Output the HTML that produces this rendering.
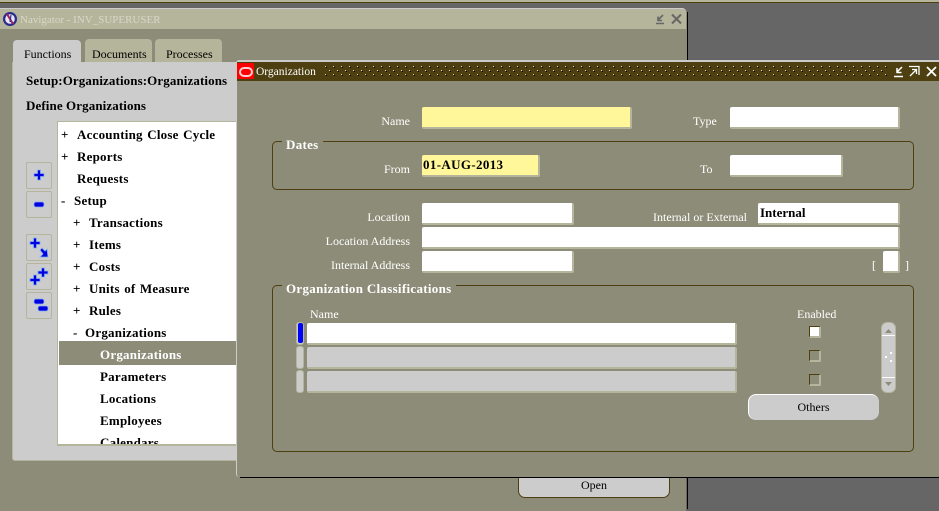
<!DOCTYPE html>
<html><head><meta charset="utf-8"><style>
html,body{margin:0;padding:0}
body{width:939px;height:511px;overflow:hidden;position:relative;background:#666;font-family:"Liberation Serif",serif;font-size:12px;-webkit-font-smoothing:none;font-smooth:never}
div{position:absolute;box-sizing:border-box}
.t{white-space:nowrap;line-height:16px;height:16px}
.w{color:#fff}
.r{text-align:right}
.b{font-weight:bold;font-size:13px;letter-spacing:.1px}
.tr{color:#000;font-weight:bold;font-size:13px;left:0;letter-spacing:.22px;word-spacing:1px}
.f{background:#fff;border-right:2px solid #b5b59c;border-bottom:2px solid #b5b59c;border-radius:2px}
.y{background:#fff799}
.g{background:#ccc}
.btn{background:#ccc;border:1px solid #b5b59c;border-radius:2px;width:26px;height:27px;left:26px}
.grp{border:1px solid #4d3f10;border-radius:5px}
.leg{background:#8c8c78;color:#fff;font-weight:bold;font-size:13px;padding:0 4px;line-height:16px;white-space:nowrap;letter-spacing:.3px}
.ind{left:296px;width:8px;height:23px;background:#ccc;border:1px solid #b5b59c;border-radius:3px}
.cb{width:12px;height:12px;border-top:1px solid #4d3f10;border-left:1px solid #4d3f10;border-right:2px solid #b5b59c;border-bottom:2px solid #b5b59c}
svg{position:absolute;overflow:visible}
</style></head><body>
<div style="left:0;top:0;width:939px;height:2px;background:#b5b59c"></div>
<div style="left:0;top:2px;width:939px;height:1px;background:#4d3f10"></div>

<!-- Navigator window -->
<div style="left:0;top:8px;width:687px;height:503px;background:#8c8c78;border-radius:0 5px 0 0"></div>
<div style="left:687px;top:12px;width:1px;height:497px;background:#000"></div>
<div style="left:0;top:8px;width:686px;height:21px;background:#b5b59c;border-top:1px solid #ccc;border-radius:0 4px 0 0"></div>
<svg style="left:2px;top:11px" width="16" height="16" viewBox="0 0 16 16"><circle cx="8" cy="8" r="7" fill="#2a2a90"/><circle cx="8" cy="8" r="4.8" fill="#e8e8f0"/><path d="M5 3L11 13" stroke="#a02060" stroke-width="2"/><path d="M9 4L8 11" stroke="#303090" stroke-width="1.2"/></svg>
<div class="t" style="left:20px;top:12px;color:#d8d8c8;font-size:11px">Navigator - INV_SUPERUSER</div>
<svg style="left:655px;top:13px" width="28" height="12" viewBox="0 0 28 12"><path d="M1 10.5H9M8 2L3 7M3 3.5V7.5H7" stroke="#666" stroke-width="1.6" fill="none"/><path d="M17 1.5L26 10.5M26 1.5L17 10.5" stroke="#666" stroke-width="2" fill="none"/></svg>

<div style="left:85px;top:39px;width:67px;height:24px;background:#b5b59c;border-radius:4px 4px 0 0"></div>
<div style="left:155px;top:39px;width:67px;height:24px;background:#b5b59c;border-radius:4px 4px 0 0"></div>
<div style="left:13px;top:40px;width:68px;height:24px;background:#ccc;border-radius:4px 4px 0 0"></div>
<div style="left:12px;top:62px;width:230px;height:399px;background:#ccc;border-bottom:1px solid #b5b59c;border-left:1px solid #b5b59c;border-radius:0 0 0 3px"></div>
<div class="t" style="left:24px;top:46px;color:#000">Functions</div>
<div class="t" style="left:92px;top:46px;color:#000">Documents</div>
<div class="t" style="left:166px;top:46px;color:#000">Processes</div>
<div class="t b" style="left:26px;top:73px;color:#000">Setup:Organizations:Organizations</div>
<div class="t b" style="left:26px;top:98px;color:#000">Define Organizations</div>

<div class="btn" style="top:162px"></div>
<div class="btn" style="top:191px"></div>
<div class="btn" style="top:234px"></div>
<div class="btn" style="top:263px"></div>
<div class="btn" style="top:292px"></div>
<svg style="left:26px;top:162px" width="26" height="160" viewBox="0 0 26 160">
<g fill="#0000e0" stroke="#7fb0f0" stroke-width=".8">
<path d="M11.5 8h3v3.5H18v3h-3.5V18h-3v-3.5H8v-3h3.5z"/>
<rect x="8" y="40" width="10" height="5" rx="2"/>
<path d="M7.5 76h3v3.5H14v3h-3.5V86h-3v-3.5H4v-3h3.5z"/>
<path d="M14 88l2-2 3 3 2-2 1 8h-8l2-2 1-1z"/>
<path d="M15.5 106h3v3H22v3h-3.5v3h-3v-3H12v-3h3.5z"/>
<path d="M7.500 113h3v3.500H14v3h-3.500V123h-3v-3.500H4v-3h3.500z"/>
<rect x="8" y="137" width="10" height="5" rx="2"/>
<rect x="12" y="144" width="10" height="5" rx="2"/>
</g></svg>

<!-- Tree -->
<div style="left:57px;top:121px;width:179px;height:325px;background:#fff;border-top:1px solid #b5b59c;border-bottom:2px solid #b5b59c;border-left:1px solid #b5b59c;overflow:hidden">
<div style="left:1px;top:219px;width:178px;height:24px;background:#8c8c78"></div>
<div class="t tr" style="left:3px;top:5px">+</div><div class="t tr" style="left:19px;top:5px">Accounting Close Cycle</div>
<div class="t tr" style="left:3px;top:27px">+</div><div class="t tr" style="left:19px;top:27px">Reports</div>
<div class="t tr" style="left:19px;top:49px">Requests</div>
<div class="t tr" style="left:3px;top:71px">-</div><div class="t tr" style="left:16px;top:71px">Setup</div>
<div class="t tr" style="left:15px;top:93px">+</div><div class="t tr" style="left:31px;top:93px">Transactions</div>
<div class="t tr" style="left:15px;top:115px">+</div><div class="t tr" style="left:31px;top:115px">Items</div>
<div class="t tr" style="left:15px;top:137px">+</div><div class="t tr" style="left:31px;top:137px">Costs</div>
<div class="t tr" style="left:15px;top:159px">+</div><div class="t tr" style="left:31px;top:159px">Units of Measure</div>
<div class="t tr" style="left:15px;top:181px">+</div><div class="t tr" style="left:31px;top:181px">Rules</div>
<div class="t tr" style="left:15px;top:203px">-</div><div class="t tr" style="left:27px;top:203px">Organizations</div>
<div class="t tr" style="left:42px;top:225px;color:#fff">Organizations</div>
<div class="t tr" style="left:42px;top:247px">Parameters</div>
<div class="t tr" style="left:42px;top:269px">Locations</div>
<div class="t tr" style="left:42px;top:291px">Employees</div>
<div class="t tr" style="left:42px;top:313px">Calendars</div>
</div>

<!-- Open button -->
<div style="left:518px;top:477px;width:152px;height:21px;background:#ccc;border:1px solid #4d3f10;border-top:none;border-radius:0 0 7px 7px"></div>
<div class="t" style="left:518px;top:477px;width:152px;text-align:center;color:#000">Open</div>
<div style="left:686px;top:477px;width:253px;height:34px;background:#666"></div>
<div style="left:687px;top:477px;width:1px;height:32px;background:#000"></div>

<!-- Organization window -->
<div style="left:236px;top:60px;width:703px;height:417px;background:#8c8c78;border-left:1px solid #ccc;border-top:2px solid #ccc;border-radius:3px 0 0 3px"></div>
<div style="left:240px;top:477px;width:699px;height:1px;background:#000"></div>
<div style="left:237px;top:62px;width:702px;height:19px;background:#4d3f10"></div>
<div style="left:237px;top:63px;width:17px;height:16px;background:#f00"></div>
<svg style="left:239px;top:67px" width="14" height="10"><rect x="1" y="1" width="12" height="8" rx="4" fill="none" stroke="#ffd0d0" stroke-width="2"/></svg>
<div class="t" style="left:256px;top:64px;color:#fff;font-size:11.5px">Organization</div>
<svg style="left:324px;top:66px" width="565" height="12"><defs><pattern id="p" width="8" height="8" patternUnits="userSpaceOnUse"><rect x="1" y="0" width="1" height="1" fill="#d8d8c8"/><rect x="2" y="1" width="1" height="1" fill="#000"/><rect x="5" y="4" width="1" height="1" fill="#d8d8c8"/><rect x="6" y="5" width="1" height="1" fill="#000"/></pattern></defs><rect width="565" height="12" fill="url(#p)"/></svg>
<svg style="left:893px;top:65px" width="46" height="13" viewBox="0 0 46 13"><path d="M1 11.5H10M9 2L4 7M4 3V7.5H8.5" stroke="#fff" stroke-width="1.5" fill="none"/><path d="M16 1.5H26V10M17 11L23 5M19 4.500H23.500V9" stroke="#fff" stroke-width="1.3" fill="none"/><path d="M34 2L43 11M43 2L34 11" stroke="#fff" stroke-width="1.8" fill="none"/></svg>

<div class="t w r" style="left:330px;top:113px;width:80px">Name</div>
<div class="f y" style="left:422px;top:107px;width:210px;height:22px"></div>
<div class="t w" style="left:693px;top:113px">Type</div>
<div class="f" style="left:730px;top:107px;width:170px;height:22px"></div>

<div class="grp" style="left:272px;top:141px;width:642px;height:49px"></div>
<div class="leg" style="left:282px;top:137px">Dates</div>
<div class="t w r" style="left:330px;top:161px;width:80px">From</div>
<div class="f y" style="left:422px;top:155px;width:118px;height:22px"></div>
<div class="t b" style="left:423px;top:157px;color:#000;letter-spacing:.35px">01-AUG-2013</div>
<div class="t w" style="left:700px;top:161px">To</div>
<div class="f" style="left:730px;top:155px;width:113px;height:22px"></div>

<div class="t w r" style="left:310px;top:209px;width:100px">Location</div>
<div class="f" style="left:422px;top:203px;width:152px;height:22px"></div>
<div class="t w r" style="left:620px;top:209px;width:127px">Internal or External</div>
<div class="f" style="left:758px;top:203px;width:142px;height:22px"></div>
<div class="t b" style="left:760px;top:205px;color:#000;letter-spacing:0">Internal</div>
<div class="t w r" style="left:300px;top:233px;width:110px">Location Address</div>
<div class="f" style="left:422px;top:227px;width:478px;height:22px"></div>
<div class="t w r" style="left:300px;top:257px;width:110px">Internal Address</div>
<div class="f" style="left:422px;top:251px;width:152px;height:22px"></div>
<div class="t w" style="left:872px;top:257px">[</div>
<div class="f" style="left:883px;top:251px;width:17px;height:22px"></div>
<div class="t w" style="left:905px;top:257px">]</div>

<div class="grp" style="left:272px;top:285px;width:642px;height:167px"></div>
<div class="leg" style="left:282px;top:281px">Organization Classifications</div>
<div class="t w" style="left:310px;top:306px">Name</div>
<div class="t w" style="left:797px;top:306px">Enabled</div>

<div class="ind" style="top:322px"></div><div style="left:298px;top:323px;width:5px;height:20px;background:#00f;border-radius:2px"></div>
<div class="ind" style="top:346px"></div>
<div class="ind" style="top:370px"></div>
<div class="f" style="left:307px;top:323px;width:430px;height:22px"></div>
<div class="f g" style="left:307px;top:347px;width:430px;height:22px"></div>
<div class="f g" style="left:307px;top:371px;width:430px;height:22px"></div>
<div class="cb" style="left:809px;top:326px;background:#fff"></div>
<div class="cb" style="left:809px;top:350px"></div>
<div class="cb" style="left:809px;top:374px"></div>

<div style="left:881px;top:322px;width:15px;height:71px;background:#ccc;border:1px solid #b5b59c;border-radius:6px"></div>
<div style="left:882px;top:335px;width:13px;height:1px;background:#fff"></div>
<div style="left:882px;top:377px;width:13px;height:1px;background:#fff"></div>
<svg style="left:881px;top:322px" width="15" height="71"><path d="M4 11L7.500 7L11 11Z" fill="#8c8c78"/><path d="M4 60L7.500 64L11 60Z" fill="#8c8c78"/><rect x="9" y="30" width="2" height="2" fill="#fff"/><rect x="4" y="34" width="2" height="2" fill="#fff"/><rect x="9" y="38" width="2" height="2" fill="#fff"/></svg>

<div style="left:748px;top:394px;width:131px;height:26px;background:#ccc;border-top:1px solid #fff;border-left:1px solid #fff;border-radius:8px"></div>
<div class="t" style="left:748px;top:399px;width:131px;text-align:center;color:#000">Others</div>
</body></html>
